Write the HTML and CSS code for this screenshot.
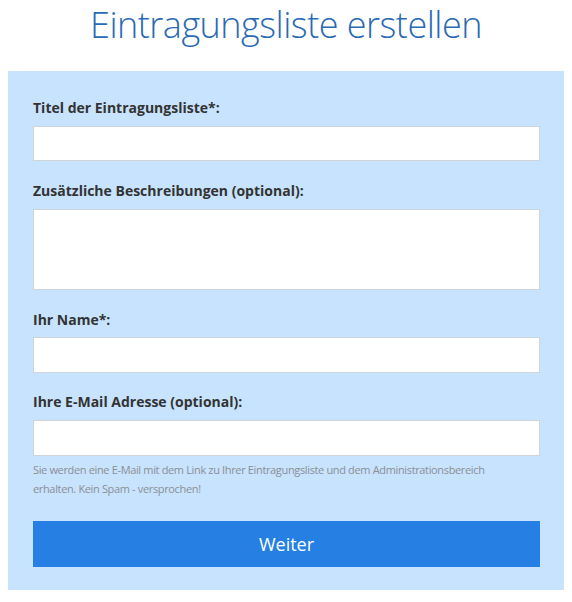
FILE: index.html
```html
<!DOCTYPE html>
<html lang="de">
<head>
<meta charset="utf-8">
<title>Eintragungsliste erstellen</title>
<link rel="stylesheet" href="styles.css">
</head>
<body>
<h1 class="page-title">Eintragungsliste erstellen</h1>
<form class="panel">
  <label class="field-label" for="title">Titel der Eintragungsliste*:</label>
  <input class="field-input" id="title" type="text">
  <label class="field-label" for="desc">Zusätzliche Beschreibungen (optional):</label>
  <textarea class="field-input field-area" id="desc"></textarea>
  <label class="field-label label-tight" for="name">Ihr Name*:</label>
  <input class="field-input field-tall" id="name" type="text">
  <label class="field-label" for="mail">Ihre E-Mail Adresse (optional):</label>
  <input class="field-input field-tall field-last" id="mail" type="email">
  <p class="help">Sie werden eine E-Mail mit dem Link zu Ihrer Eintragungsliste und dem Administrationsbereich erhalten. Kein Spam - versprochen!</p>
  <button class="submit" type="button">Weiter</button>
</form>
</body>
</html>
```
FILE: styles.css
```css
html, body {
  margin: 0;
  padding: 0;
  background: #ffffff;
}
body {
  font-family: "Open Sans", "Noto Sans", "Liberation Sans", sans-serif;
  color: #333333;
  padding: 0 8px;
}
.page-title {
  margin: 0;
  height: 71px;
  line-height: 49px;
  text-align: center;
  font-weight: 300;
  font-size: 36px;
  color: #2a6ab5;
  letter-spacing: -0.5px;
}
.panel {
  display: flex;
  flex-direction: column;
  background: #c8e3fd;
  padding: 27px 24px 23px 25px;
  margin: 0;
}
.field-label {
  display: block;
  font-weight: 700;
  font-size: 14px;
  line-height: 20px;
  margin: 0 0 8px 0;
  color: #333333;
}
.label-tight {
  margin-bottom: 7px;
}
.field-input {
  display: block;
  box-sizing: border-box;
  width: 100%;
  height: 35px;
  margin: 0 0 20px 0;
  border: 1px solid #cfd4d9;
  background: #ffffff;
  font: inherit;
  padding: 0 8px;
  border-radius: 0;
}
.field-tall {
  height: 36px;
  margin-bottom: 19px;
}
.field-area {
  height: 81px;
  resize: none;
}
.field-last {
  margin-bottom: 4px;
}
.help {
  margin: 0 0 23px 0;
  max-width: 470px;
  font-size: 11px;
  line-height: 19px;
  letter-spacing: -0.35px;
  color: #8a8f94;
}
.submit {
  height: 46px;
  border: none;
  background: #2680e3;
  color: #ffffff;
  font-family: "Open Sans", "Noto Sans", sans-serif;
  font-size: 18px;
  cursor: pointer;
}
```
